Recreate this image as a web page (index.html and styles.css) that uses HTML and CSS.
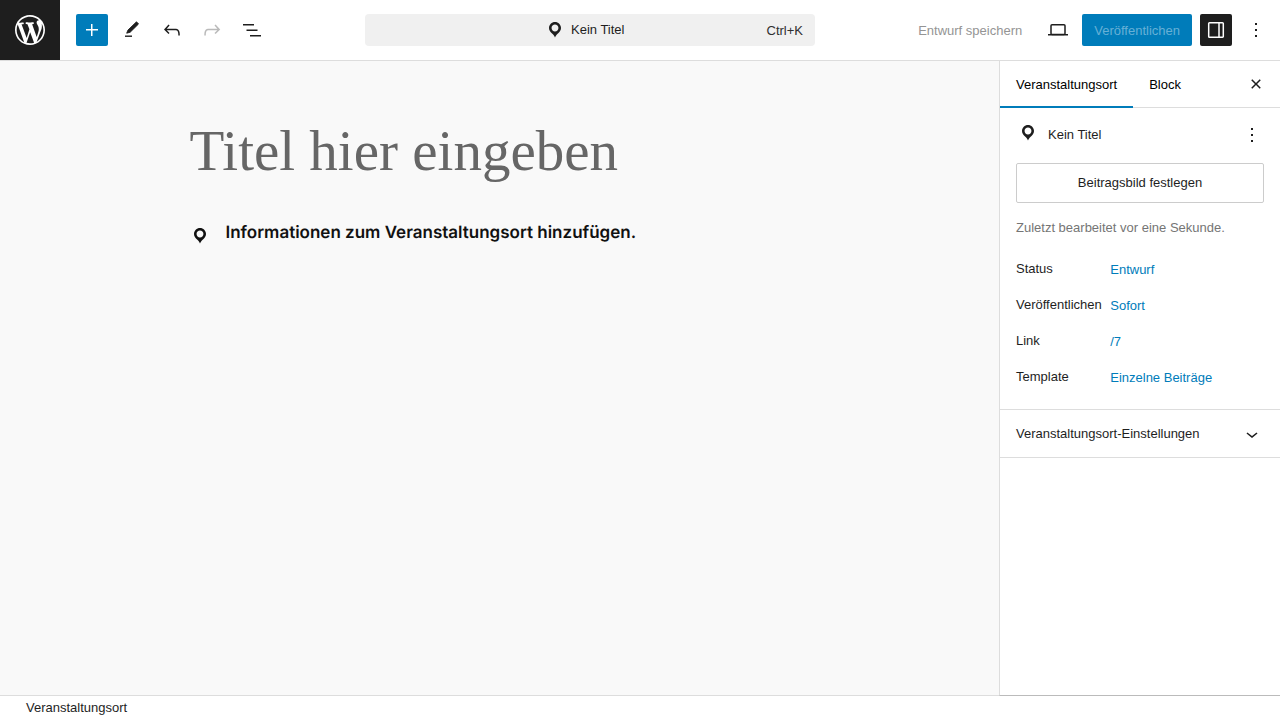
FILE: index.html
```
<!DOCTYPE html>
<html lang="de">
<head>
<meta charset="utf-8">
<meta name="viewport" content="width=device-width, initial-scale=1">
<title>Veranstaltungsort bearbeiten</title>
<link rel="stylesheet" href="styles.css">
</head>
<body>
<svg class="symbols" aria-hidden="true">
  <symbol id="pin" viewBox="0 0 20 20"><path d="M10 2C6.69 2 4 4.69 4 8c0 2.02 1.17 3.71 2.53 4.89.43.37 1.18.96 1.85 1.83.74.97 1.41 2.01 1.62 2.71.21-.7.88-1.74 1.62-2.71.67-.87 1.42-1.46 1.85-1.83C14.83 11.71 16 10.02 16 8c0-3.31-2.69-6-6-6zm0 2.56c1.9 0 3.44 1.54 3.44 3.44S11.9 11.44 10 11.44 6.56 9.9 6.56 8 8.1 4.56 10 4.56z"/></symbol>
  <symbol id="more" viewBox="0 0 24 24"><path d="M13 19h-2v-2h2v2zm0-6h-2v-2h2v2zm0-6h-2V5h2v2z"/></symbol>
</svg>
<div class="editor">
  <header class="header">
    <a class="home" href="#" aria-label="Zur Übersicht">
      <svg class="logo" viewBox="-2 -2 24 24"><path d="M20 10c0-5.51-4.49-10-10-10C4.48 0 0 4.49 0 10c0 5.52 4.48 10 10 10 5.51 0 10-4.48 10-10zM7.78 15.37L4.37 6.22c.55-.02 1.17-.08 1.17-.08.5-.06.44-1.13-.06-1.11 0 0-1.45.11-2.37.11-.18 0-.37 0-.58-.01C4.12 2.69 6.87 1.11 10 1.11c2.33 0 4.45.87 6.05 2.34-.68-.11-1.65.39-1.65 1.58 0 .74.45 1.36.9 2.1.35.61.55 1.36.55 2.46 0 1.49-1.4 5-1.4 5l-3.03-8.37c.54-.02.82-.17.82-.17.5-.05.44-1.25-.06-1.22 0 0-1.44.12-2.38.12-.87 0-2.33-.12-2.33-.12-.5-.03-.56 1.2-.06 1.22l.92.08 1.26 3.41zM17.41 10c.24-.64.74-1.87.43-4.25.7 1.29 1.05 2.71 1.05 4.25 0 3.29-1.73 6.24-4.4 7.78.97-2.59 1.94-5.2 2.92-7.78zM6.1 18.09C3.12 16.65 1.11 13.53 1.11 10c0-1.3.23-2.48.72-3.59C3.25 10.3 4.67 14.2 6.1 18.09zm4.03-6.63l2.58 6.98c-.86.29-1.76.45-2.71.45-.79 0-1.57-.11-2.29-.33.81-2.38 1.62-4.74 2.42-7.1z"/></svg>
    </a>
    <div class="tools">
      <button class="icon-button primary" aria-label="Block hinzufügen"><svg class="icon" viewBox="0 0 24 24"><path d="M11 12.5V18H12.5V12.5H18V11H12.5V6H11V11H6V12.5H11Z"/></svg></button>
      <button class="icon-button" aria-label="Werkzeuge"><svg class="icon" viewBox="0 0 24 24"><path d="M16.5 3.8 8 12 6.700 15.200 10.200 14.200 18.500 6Z" stroke="currentColor" stroke-width=".9" stroke-linejoin="round"/><path d="M5 17.500h7v1.400H5z"/></svg></button>
      <button class="icon-button" aria-label="Rückgängig"><svg class="icon" viewBox="0 0 24 24"><path d="M18.3 11.7c-.6-.6-1.4-.9-2.3-.9H6.7l2.9-3.3-1.1-1-4.5 5L8.5 16l1-1-2.7-2.7H16c.5 0 .9.2 1.3.5 1 1 1 3.4 1 4.5v.3h1.5v-.2c0-1.5 0-4.3-1.5-5.7z"/></svg></button>
      <button class="icon-button faded" disabled aria-label="Wiederholen"><svg class="icon" viewBox="0 0 24 24"><path d="M15.6 6.5l-1.1 1 2.9 3.3H8c-.9 0-1.7.3-2.3.9-1.4 1.5-1.4 4.2-1.4 5.6v.2h1.5v-.3c0-1.1 0-3.5 1-4.5.3-.3.7-.5 1.3-.5h9.2L14.5 15l1.1 1.1 4.6-4.6-4.6-5z"/></svg></button>
      <button class="icon-button" aria-label="Dokumentübersicht"><svg class="icon" viewBox="0 0 24 24"><path d="M3 6h11v1.5H3V6Zm3.5 5.5h11V13h-11v-1.5ZM21 17H10v1.5h11V17Z"/></svg></button>
    </div>
    <button class="command">
      <span class="command-title"><svg class="pin"><use href="#pin"/></svg><span>Kein Titel</span></span>
      <span class="shortcut">Ctrl+K</span>
    </button>
    <div class="settings">
      <button class="text-button" disabled>Entwurf speichern</button>
      <button class="icon-button" aria-label="Vorschau"><svg class="icon" viewBox="0 0 24 24"><rect x="5" y="6.750" width="14" height="9.800" rx="1" fill="none" stroke="currentColor" stroke-width="1.500"/><path d="M2 16h20v1.500H2z"/></svg></button>
      <button class="publish" disabled>Veröffentlichen</button>
      <button class="icon-button pressed" aria-label="Einstellungen"><svg class="icon" viewBox="0 0 24 24"><path d="M5.500 4.750h13a.8.8 0 0 1 .8.8v12.900a.8.8 0 0 1-.8.8h-13a.8.8 0 0 1-.8-.8V5.550a.8.8 0 0 1 .8-.8zM15 5v14" fill="none" stroke="currentColor" stroke-width="1.500"/></svg></button>
      <button class="icon-button" aria-label="Optionen"><svg class="icon"><use href="#more"/></svg></button>
    </div>
  </header>
  <div class="body">
    <main class="canvas">
      <div class="content">
        <input class="title" type="text" placeholder="Titel hier eingeben" aria-label="Titel hinzufügen">
        <div class="venue">
          <svg class="pin"><use href="#pin"/></svg>
          <h2 class="venue-text">Informationen zum Veranstaltungsort hinzufügen.</h2>
        </div>
      </div>
    </main>
    <aside class="sidebar">
      <div class="tabs">
        <div class="tab-list" role="tablist">
          <button class="tab active" role="tab" aria-selected="true">Veranstaltungsort</button>
          <button class="tab" role="tab" aria-selected="false">Block</button>
        </div>
        <button class="icon-button" aria-label="Einstellungen schließen"><svg class="icon" viewBox="0 0 24 24"><path d="M12 13.060l3.712 3.713 1.061-1.060L13.061 12l3.712-3.712-1.060-1.060L12 10.938 8.288 7.227l-1.061 1.060L10.939 12l-3.712 3.712 1.060 1.061L12 13.061z"/></svg></button>
      </div>
      <section class="summary">
        <div class="card">
          <svg class="pin"><use href="#pin"/></svg>
          <h2 class="card-title">Kein Titel</h2>
          <button class="icon-button small" aria-label="Aktionen"><svg class="icon"><use href="#more"/></svg></button>
        </div>
        <button class="featured">Beitragsbild festlegen</button>
        <p class="edited">Zuletzt bearbeitet vor eine Sekunde.</p>
        <dl class="rows">
          <div class="row"><dt>Status</dt><dd><button class="value">Entwurf</button></dd></div>
          <div class="row"><dt>Veröffentlichen</dt><dd><button class="value">Sofort</button></dd></div>
          <div class="row"><dt>Link</dt><dd><button class="value">/7</button></dd></div>
          <div class="row"><dt>Template</dt><dd><button class="value">Einzelne Beiträge</button></dd></div>
        </dl>
      </section>
      <button class="panel-toggle" aria-expanded="false">
        <span>Veranstaltungsort-Einstellungen</span>
        <svg class="icon" viewBox="0 0 24 24"><path d="M17.5 11.6L12 16l-5.500-4.400.9-1.200L12 14l4.500-3.600 1 1.200z"/></svg>
      </button>
    </aside>
  </div>
  <footer class="footer">Veranstaltungsort</footer>
</div>
</body>
</html>
```
FILE: styles.css
```
* { box-sizing: border-box; }
body {
  margin: 0;
  font: 13px/20px "Liberation Sans", Arial, sans-serif;
  color: #1e1e1e;
  background: #fff;
}
button {
  font: inherit;
  color: inherit;
  background: none;
  border: 0;
  padding: 0;
  border-radius: 2px;
}
svg { display: block; fill: currentColor; flex: none; }
h2, p, dl, dd { margin: 0; }
.symbols { display: none; }
.icon { width: 24px; height: 24px; }
.pin { width: 20px; height: 20px; }

.editor { display: flex; flex-direction: column; height: 100vh; }
.header {
  display: grid;
  grid-template-columns: 60px 61fr minmax(200px, 450px) 93fr;
  align-items: center;
  border-bottom: 1px solid #ddd;
}
.home {
  display: flex;
  align-items: center;
  justify-content: center;
  height: 60px;
  color: #fff;
  background: #1e1e1e;
}
.logo { width: 36px; height: 36px; }
.tools { display: flex; gap: 8px; padding-left: 16px; }
.icon-button {
  display: flex;
  align-items: center;
  justify-content: center;
  width: 32px;
  height: 32px;
}
.small { width: 24px; height: 24px; }
.primary { color: #fff; background: #007cba; }
.pressed { color: #fff; background: #1e1e1e; }
.faded { opacity: 0.3; }
.command {
  display: grid;
  grid-template-columns: 1fr auto;
  align-items: center;
  height: 32px;
  padding-right: 12px;
  border-radius: 4px;
  background: #f0f0f0;
}
.command-title {
  display: flex;
  align-items: center;
  justify-content: center;
  gap: 6px;
  padding-left: 38px;
}
.shortcut { padding-top: 2px; color: #2f2f2f; }
.settings {
  display: flex;
  align-items: center;
  justify-content: flex-end;
  gap: 8px;
  padding-right: 8px;
  white-space: nowrap;
}
.text-button { height: 32px; padding: 2px 12px 0; color: #949494; }
.publish {
  height: 32px;
  padding: 2px 12px 0;
  color: #66b0d6;
  background: #007cba;
}

.body { display: flex; flex: 1; min-height: 0; }
.canvas { flex: 1; min-width: 0; padding: 54px 24px; background: #f9f9f9; }
.content { max-width: 620px; margin: 0 auto; }
.title {
  display: block;
  width: 100%;
  height: 72px;
  padding: 0;
  border: 0;
  outline: 0;
  background: none;
  font: 57px/72px "Liberation Serif", "Times New Roman", serif;
}
.title::placeholder { color: #666; opacity: 1; }
.venue { display: flex; align-items: flex-end; gap: 16px; margin-top: 34px; color: #111; }
.venue-text {
  padding-bottom: 1px;
  font: 600 17px/24px Inter, sans-serif;
  text-rendering: geometricPrecision;
}

.sidebar {
  position: relative;
  width: 281px;
  margin-bottom: -1px;
  overflow: auto;
  border-left: 1px solid #ddd;
  border-bottom: 1px solid #bbb;
  background: #fff;
}
.tabs {
  display: flex;
  justify-content: space-between;
  align-items: center;
  height: 47px;
  padding-right: 8px;
  border-bottom: 1px solid #ddd;
}
.tab-list { display: flex; align-self: stretch; }
.tab { padding: 0 16px; height: 47px; border-radius: 0; color: #000; }
.active { box-shadow: inset 0 -2px #007cba; }
.summary { padding: 15px 16px; border-bottom: 1px solid #ddd; }
.card { display: grid; grid-template-columns: 24px 1fr 24px; align-items: center; gap: 8px; }
.card .pin { align-self: start; justify-self: center; }
.card-title { font-size: 13px; line-height: 20px; font-weight: 400; }
.featured {
  width: 100%;
  height: 40px;
  margin-top: 16px;
  border: 1px solid #ccc;
}
.edited { margin: 15px 0 16px; color: #757575; }
.rows { display: grid; gap: 4px; }
.row { display: grid; grid-template-columns: 38% 1fr; align-items: center; min-height: 32px; }
.row dt { padding-bottom: 2px; }
.value { height: 32px; color: #007cba; }
.panel-toggle {
  display: flex;
  align-items: center;
  justify-content: space-between;
  width: 100%;
  height: 48px;
  padding: 0 16px;
  border-radius: 0;
  border-bottom: 1px solid #ddd;
}
.footer {
  height: 25px;
  padding: 2px 26px;
  border-top: 1px solid #ddd;
}
```
